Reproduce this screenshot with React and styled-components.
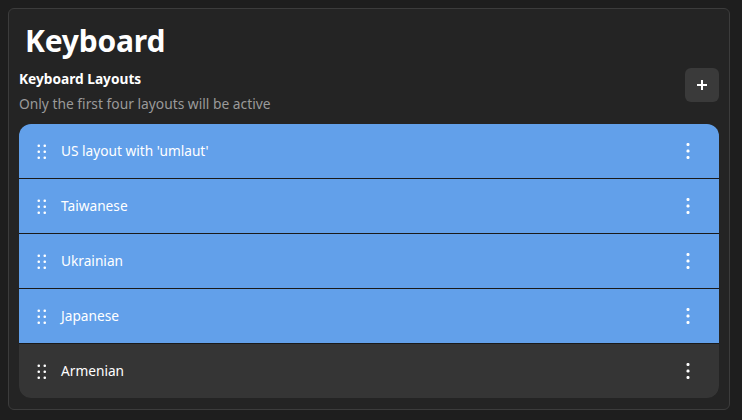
import React from "react";
import styled, { createGlobalStyle } from "styled-components";

const GlobalStyle = createGlobalStyle`
  html, body {
    margin: 0;
    padding: 0;
    background: #1e1e1e;
    font-family: "Noto Sans", "Open Sans", sans-serif;
    color: #ffffff;
  }
`;

const Page = styled.div`
  width: 742px;
  height: 420px;
  padding: 8px 12px 10px 8px;
  box-sizing: border-box;
`;

const Panel = styled.div`
  height: 100%;
  box-sizing: border-box;
  background: #242424;
  border: 1px solid #3c3c3c;
  border-radius: 6px;
  padding: 0 10px 0 10px;
`;

const Title = styled.h1`
  margin: 0;
  padding: 13px 0 0 6px;
  font-size: 30px;
  line-height: 38px;
  font-weight: 700;
  letter-spacing: -0.2px;
`;

const Header = styled.div`
  display: flex;
  align-items: flex-start;
  justify-content: space-between;
  margin-top: 9px;
`;

const HeaderText = styled.div`
  display: flex;
  flex-direction: column;
`;

const SectionTitle = styled.div`
  font-size: 13.7px;
  font-weight: 700;
  line-height: 20px;
`;

const SectionSub = styled.div`
  margin-top: 5px;
  font-size: 13.8px;
  line-height: 20px;
  color: #9a9a9a;
`;

const AddButton = styled.button`
  width: 34px;
  height: 34px;
  margin-top: -1px;
  border: none;
  border-radius: 6px;
  background: #3a3a3a;
  display: flex;
  align-items: center;
  justify-content: center;
  padding: 0;
`;

const List = styled.div`
  margin-top: 10px;
  border-radius: 12px;
  overflow: hidden;
  display: flex;
  flex-direction: column;
  gap: 1px;
  background: #1a1a1a;
`;

const Row = styled.div`
  height: 54px;
  display: flex;
  align-items: center;
  padding: 0 29px 0 17px;
  background: ${({ active }) => (active ? "#62a0ea" : "#353535")};
`;

const Label = styled.span`
  flex: 1;
  margin-left: 15px;
  margin-top: -2px;
  font-size: 13.7px;
`;

const DragHandle = () => (
  <svg width="10" height="16" viewBox="0 0 10 16">
    {[0, 1, 2].map((r) =>
      [0, 1].map((c) => (
        <rect key={`${r}-${c}`} x={1.5 + c * 6} y={1.5 + r * 6} width="2.5" height="2.5" rx="1" fill="#fff" />
      ))
    )}
  </svg>
);

const MoreIcon = () => (
  <svg width="4" height="16" viewBox="0 0 4 16">
    {[0, 1, 2].map((r) => (
      <rect key={r} x="0.5" y={0 + r * 6.5} width="3" height="3" rx="1.2" fill="#fff" />
    ))}
  </svg>
);

const PlusIcon = () => (
  <svg width="12" height="12" viewBox="0 0 12 12">
    <rect x="5" y="1" width="2" height="10" fill="#fff" />
    <rect x="1" y="5" width="10" height="2" fill="#fff" />
  </svg>
);

const layouts = [
  { name: "US layout with 'umlaut'", active: true },
  { name: "Taiwanese", active: true },
  { name: "Ukrainian", active: true },
  { name: "Japanese", active: true },
  { name: "Armenian", active: false },
];

export default function App() {
  return (
    <>
      <GlobalStyle />
      <Page>
        <Panel>
          <Title>Keyboard</Title>
          <Header>
            <HeaderText>
              <SectionTitle>Keyboard Layouts</SectionTitle>
              <SectionSub>Only the first four layouts will be active</SectionSub>
            </HeaderText>
            <AddButton>
              <PlusIcon />
            </AddButton>
          </Header>
          <List>
            {layouts.map((l) => (
              <Row key={l.name} active={l.active}>
                <DragHandle />
                <Label>{l.name}</Label>
                <MoreIcon />
              </Row>
            ))}
          </List>
        </Panel>
      </Page>
    </>
  );
}
